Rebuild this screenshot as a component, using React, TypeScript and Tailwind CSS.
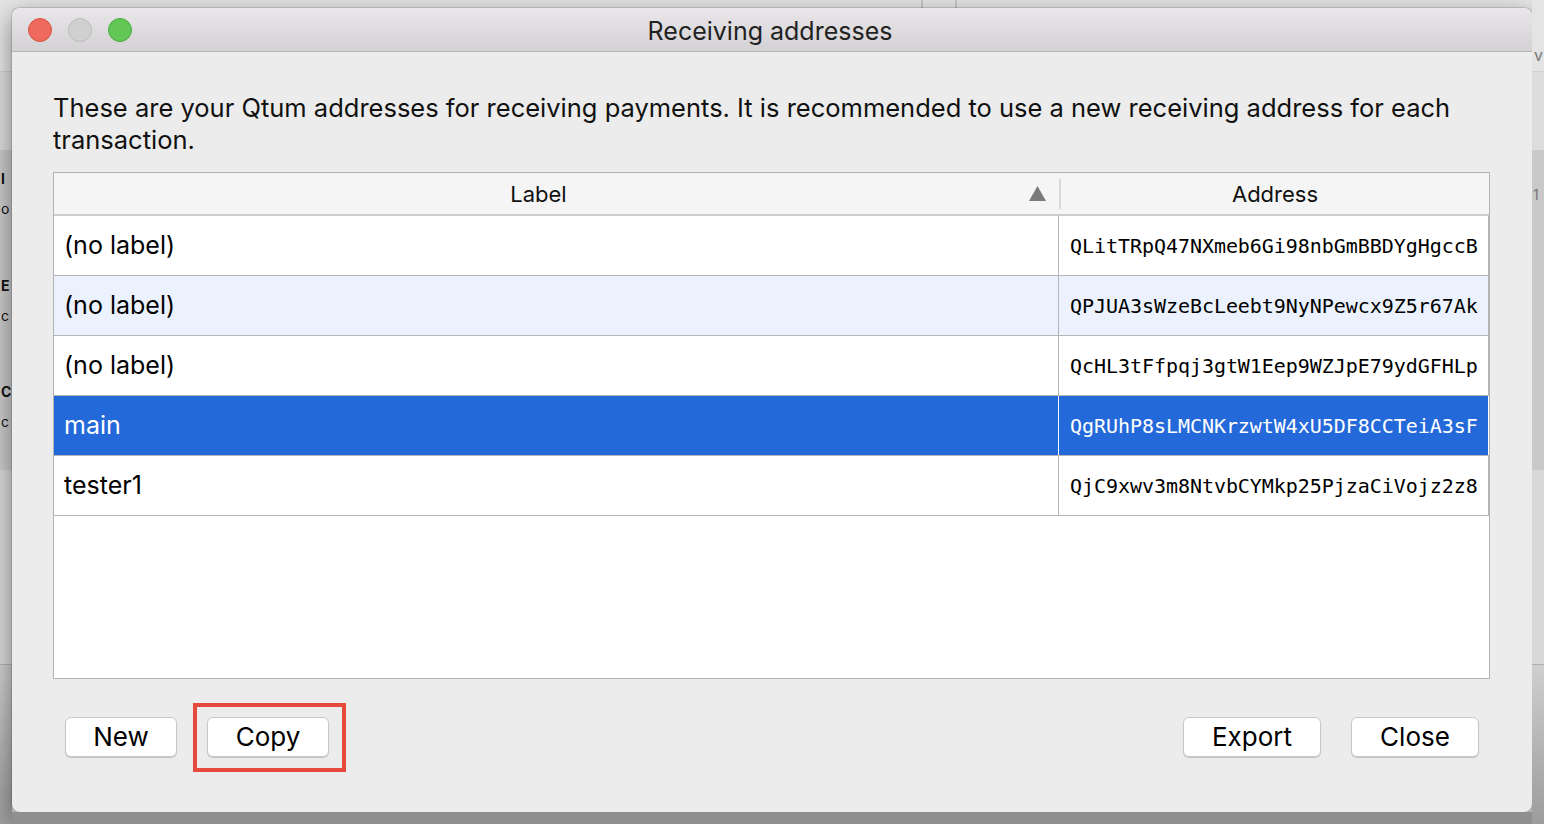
import React from "react";

const rows = [
  { label: "(no label)", address: "QLitTRpQ47NXmeb6Gi98nbGmBBDYgHgccB" },
  { label: "(no label)", address: "QPJUA3sWzeBcLeebt9NyNPewcx9Z5r67Ak" },
  { label: "(no label)", address: "QcHL3tFfpqj3gtW1Eep9WZJpE79ydGFHLp" },
  { label: "main", address: "QgRUhP8sLMCNKrzwtW4xU5DF8CCTeiA3sF" },
  { label: "tester1", address: "QjC9xwv3m8NtvbCYMkp25PjzaCiVojz2z8" },
];

const SANS = "font-['Inter','Liberation_Sans',sans-serif]";
const MONO = "font-['DejaVu_Sans_Mono','Liberation_Mono',monospace]";

function SideStrip({ side }: { side: "left" | "right" }) {
  const letters =
    side === "left"
      ? [
          ["I", "o"],
          ["E", "c"],
          ["C", "c"],
        ]
      : [
          ["", "1"],
          ["", ""],
          ["", ""],
        ];
  return (
    <div className="w-[12px] h-full flex flex-col overflow-hidden">
      <div className="h-[72px] bg-[#e4e4e4] border-b border-[#cfcfcf] flex items-end justify-end">
        {side === "right" && <span className={`${SANS} text-[16px] text-[#777] leading-none pb-[8px] pr-[1px]`}>v</span>}
      </div>
      <div className="h-[78px] bg-[#dcdcdc]" />
      <div className="h-[320px] bg-[#c9c9c9] flex flex-col">
        {letters.map((pair, i) => (
          <div key={i} className="h-[107px] flex flex-col pt-[22px] leading-none">
            <span className={`${SANS} text-[14px] font-bold text-[#111] pl-[1px]`}>{pair[0]}</span>
            <span className={`${SANS} text-[14px] ${side === "left" ? "text-[#111]" : "text-[#777]"} mt-[16px] pl-[1px]`}>{pair[1]}</span>
          </div>
        ))}
      </div>
      <div className="h-[195px] bg-[#d8d8d8] border-b border-[#b0b0b0]" />
      <div className="flex-1 bg-gradient-to-b from-[#cfcfcf] to-[#9c9c9c]" />
    </div>
  );
}

function Button({ children, w }: { children: React.ReactNode; w: string }) {
  return (
    <button
      className={`${w} h-[40px] bg-white rounded-[6px] border border-[#c9c9c9] shadow-[0_1px_1px_rgba(0,0,0,0.18)] text-[26px] text-black ${SANS} flex items-center justify-center leading-none`}
    >
      {children}
    </button>
  );
}

export default function App() {
  return (
    <div className="w-[1544px] h-[824px] flex bg-[#dcdcdc] overflow-hidden">
      <SideStrip side="left" />

      <div className="w-[1520px] h-full flex flex-col">
        <div className="h-[8px] bg-[#e4e4e4] flex">
          <div className="w-[909px]" />
          <div className="w-[2px] bg-[#c6c6c6]" />
          <div className="w-[32px]" />
          <div className="w-[2px] bg-[#c6c6c6]" />
        </div>

        <div className="h-[804px] flex flex-col rounded-[8px] bg-[#ececec] shadow-[0_8px_24px_rgba(0,0,0,0.45),0_0_0_1px_rgba(0,0,0,0.12)]">
          {/* title bar */}
          <div className="h-[44px] grid grid-cols-[1fr_auto_1fr] items-center rounded-t-[8px] bg-gradient-to-b from-[#e9e7e9] to-[#d3d1d3] border-b border-[#b6b6b6]">
            <div className="flex items-center gap-[16px] pl-[16px]">
              <span className="w-[24px] h-[24px] rounded-full bg-[#ee6a5f] border border-[#d6554a]" />
              <span className="w-[24px] h-[24px] rounded-full bg-[#d1d0d1] border border-[#bdbcbd]" />
              <span className="w-[24px] h-[24px] rounded-full bg-[#62c655] border border-[#4ea942]" />
            </div>
            <div className={`${SANS} text-[25px] text-[#222] leading-none -ml-[4px] pt-[3px]`}>Receiving addresses</div>
            <div />
          </div>

          {/* body */}
          <div className="flex-1 flex flex-col pl-[41px] pr-[42px] pt-[40px]">
            <p className={`${SANS} text-[25.5px] leading-[32px] text-[#111]`}>
              These are your Qtum addresses for receiving payments. It is recommended to use a new receiving address for each transaction.
            </p>

            <div className="mt-[16px] h-[507px] bg-white border border-[#b3b3b3] flex flex-col">
              {/* header */}
              <div className="h-[43px] shrink-0 bg-[#f5f5f5] border-b-2 border-[#cdcdcd] grid grid-cols-[1005px_430px] items-center">
                <div className="relative h-full flex items-center justify-center pr-[36px]">
                  <span className={`${SANS} text-[22px] text-[#111]`}>Label</span>
                  <svg className="absolute right-[13px] top-[13px]" width="17" height="15" viewBox="0 0 17 15">
                    <path d="M8.5 0 L17 15 L0 15 Z" fill="#7a7a7a" />
                  </svg>
                </div>
                <div className="h-full flex items-center justify-center border-l-2 border-[#dadada] my-[6px] max-h-[30px]">
                  <span className={`${SANS} text-[22px] text-[#111]`}>Address</span>
                </div>
              </div>

              {rows.map((r, i) => {
                const selected = i === 3;
                const alt = i === 1;
                const bg = selected ? "bg-[#2469d9]" : alt ? "bg-[#ebf2fd]" : "bg-white";
                const text = selected ? "text-white" : "text-black";
                return (
                  <div key={i} className={`h-[60px] shrink-0 grid grid-cols-[1005px_430px] border-b border-[#b5b5b5] ${bg}`}>
                    <div className={`flex items-center pl-[10px] border-r ${selected ? "border-white" : "border-[#b5b5b5]"}`}>
                      <span className={`${SANS} text-[25px] ${text}`}>{r.label}</span>
                    </div>
                    <div className={`flex items-center pl-[11px] border-r ${selected ? "border-white" : "border-[#b5b5b5]"}`}>
                      <span className={`${MONO} text-[20px] tracking-[-0.05px] ${text}`}>{r.address}</span>
                    </div>
                  </div>
                );
              })}
              <div className="flex-1" />
            </div>

            {/* buttons */}
            <div className="mt-[38px] flex items-center justify-between pl-[12px] pr-[11px]">
              <div className="flex items-center gap-[30px]">
                <Button w="w-[112px]">New</Button>
                <div className="relative">
                  <Button w="w-[122px]">Copy</Button>
                  <span className="absolute -left-[14px] -top-[14px] -right-[17px] -bottom-[15px] border-[4px] border-[#e64a3c] pointer-events-none" />
                </div>
              </div>
              <div className="flex items-center gap-[30px]">
                <Button w="w-[138px]">Export</Button>
                <Button w="w-[128px]">Close</Button>
              </div>
            </div>
          </div>
        </div>

        <div className="flex-1 bg-[#8f8f8f]" />
      </div>

      <SideStrip side="right" />
    </div>
  );
}
